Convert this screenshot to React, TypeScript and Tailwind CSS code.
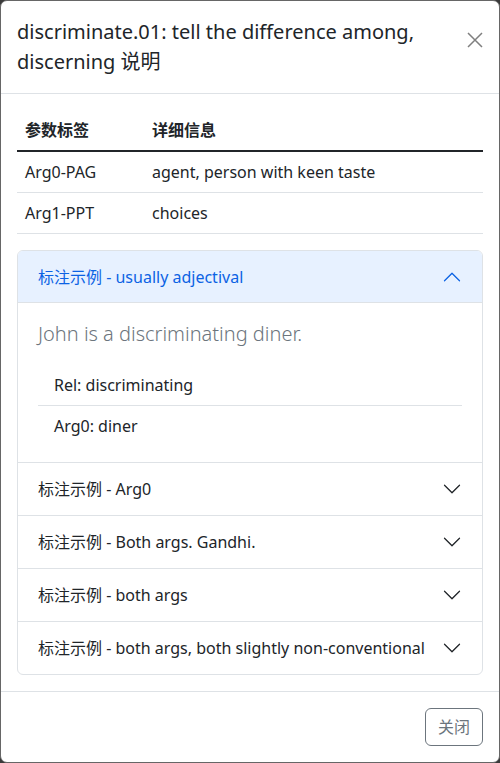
import { useState } from 'react'

const font = {
  fontFamily: '"Segoe UI", "Noto Sans", "Noto Sans CJK SC", sans-serif',
}

const examples = [
  {
    title: 'usually adjectival',
    sentence: 'John is a discriminating diner.',
    args: ['Rel: discriminating', 'Arg0: diner'],
  },
  { title: 'Arg0', sentence: '', args: [] },
  { title: 'Both args. Gandhi.', sentence: '', args: [] },
  { title: 'both args', sentence: '', args: [] },
  { title: 'both args, both slightly non-conventional', sentence: '', args: [] },
]

function Chevron({ open }: { open: boolean }) {
  return (
    <svg
      viewBox="0 0 16 16"
      className={open ? 'w-5 h-5 shrink-0 ml-auto rotate-180 text-[#0c63e4]' : 'w-5 h-5 shrink-0 ml-auto text-[#212529]'}
      fill="currentColor"
    >
      <path
        fillRule="evenodd"
        d="M1.646 4.646a.5.5 0 0 1 .708 0L8 10.293l5.646-5.647a.5.5 0 0 1 .708.708l-6 6a.5.5 0 0 1-.708 0l-6-6a.5.5 0 0 1 0-.708z"
      />
    </svg>
  )
}

export default function App() {
  const [open, setOpen] = useState(0)

  return (
    <div className="w-[500px] h-[763px] bg-[#3a3a3a]" style={font}>
      <div className="h-full flex flex-col bg-white border border-[#666] rounded-[7px] text-[#212529]">
        {/* header */}
        <div className="flex items-start pl-4 pr-4 pt-4 pb-4 border-b border-[#dee2e6]">
          <h5 className="flex-1 text-[20px] leading-[30px] font-normal pr-6">
            discriminate.01: tell the difference among, discerning 说明
          </h5>
          <button className="w-8 h-8 -mr-2 mt-[7px] flex items-center justify-center text-black/50">
            <svg viewBox="0 0 16 16" className="w-4 h-4" fill="none" stroke="currentColor" strokeWidth="1.5">
              <path d="M1 1L15 15M15 1L1 15" />
            </svg>
          </button>
        </div>

        {/* body */}
        <div className="flex-1 p-4">
          <table className="w-full text-[16px] leading-6 mb-4">
            <thead>
              <tr className="border-b-2 border-[#212529]">
                <th className="text-left font-bold px-2 py-2 w-[127px]">参数标签</th>
                <th className="text-left font-bold px-2 py-2">详细信息</th>
              </tr>
            </thead>
            <tbody>
              <tr className="border-b border-[#dee2e6]">
                <td className="px-2 py-2">Arg0-PAG</td>
                <td className="px-2 py-2">agent, person with keen taste</td>
              </tr>
              <tr className="border-b border-[#dee2e6]">
                <td className="px-2 py-2">Arg1-PPT</td>
                <td className="px-2 py-2">choices</td>
              </tr>
            </tbody>
          </table>

          <div className="border border-[#dee2e6] rounded-[6px] overflow-hidden">
            {examples.map((ex, i) => (
              <div key={i} className={i > 0 ? 'border-t border-[#dee2e6]' : ''}>
                <button
                  onClick={() => setOpen(open === i ? -1 : i)}
                  className={
                    open === i
                      ? 'w-full flex items-center text-left px-5 py-4 leading-[20px] text-[16px] bg-[#e7f1ff] text-[#0c63e4] shadow-[inset_0_-1px_0_#dee2e6]'
                      : 'w-full flex items-center text-left px-5 py-4 leading-[20px] text-[16px] text-[#212529]'
                  }
                >
                  <span>标注示例 - {ex.title}</span>
                  <Chevron open={open === i} />
                </button>
                {open === i && (
                  <div className="px-5 py-4">
                    <p className="text-[20px] leading-[30px] font-light text-[#6c757d] mb-4">{ex.sentence}</p>
                    <ul>
                      {ex.args.map((a, j) => (
                        <li
                          key={j}
                          className={j < ex.args.length - 1 ? 'px-4 py-2 leading-6 border-b border-[#dee2e6]' : 'px-4 py-2 leading-6'}
                        >
                          {a}
                        </li>
                      ))}
                    </ul>
                  </div>
                )}
              </div>
            ))}
          </div>
        </div>

        {/* footer */}
        <div className="flex justify-end px-3 py-3 border-t border-[#dee2e6]">
          <button className="m-1 px-3 h-[38px] text-[16px] text-[#6c757d] border border-[#6c757d] rounded-[6px]">
            关闭
          </button>
        </div>
      </div>
    </div>
  )
}
